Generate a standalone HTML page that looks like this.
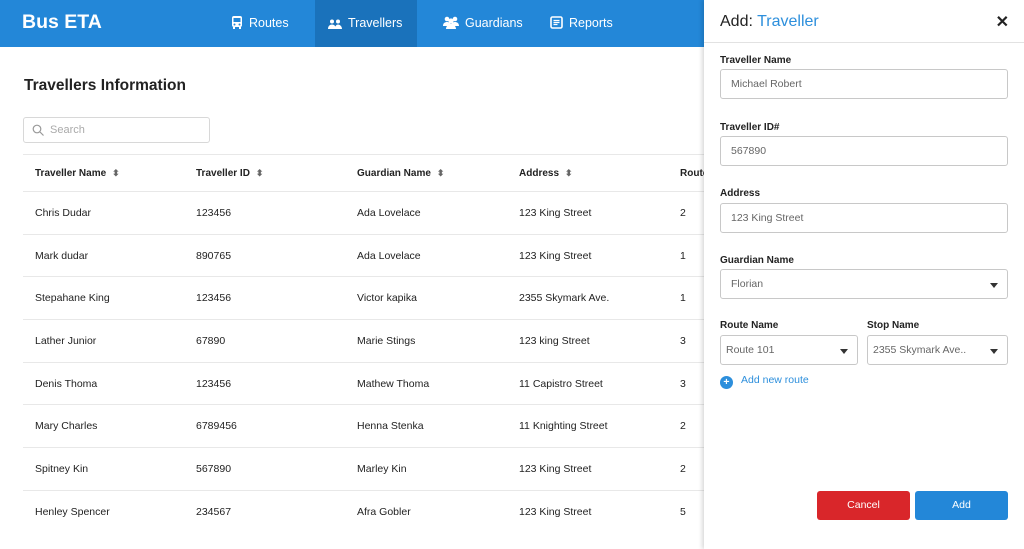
<!DOCTYPE html>
<html><head><style>
*{box-sizing:border-box;margin:0;padding:0}
body{width:1024px;height:549px;overflow:hidden;font-family:"Liberation Sans",sans-serif;background:#fff;position:relative;color:#222}
.nav{position:absolute;left:0;top:0;width:1024px;height:47px;background:#2387d8}
.logo{position:absolute;left:22px;top:11px;color:#fff;font-size:19.5px;font-weight:bold}
.tab{position:absolute;top:0;height:47px;color:#fff;font-size:12.5px;line-height:47px}
.tab svg{vertical-align:-2px;margin-right:6px}
h1{position:absolute;left:24px;top:77px;font-size:15.5px;font-weight:bold;color:#222}
.search{position:absolute;left:23px;top:117px;width:187px;height:26px;border:1px solid #d8d8d8;border-radius:3px;font-size:11px;color:#aaa;padding:6px 0 0 26px}
.search svg{position:absolute;left:8px;top:6px}
table{position:absolute;left:23px;top:154px;width:700px;border-collapse:collapse;font-size:10.5px}
td,th{height:42.7px;text-align:left;padding-left:12px;border-top:1px solid #e8e8e8;white-space:nowrap}
th{height:37px;font-weight:bold;font-size:10px}
.s{color:#666;font-size:9px;margin-left:6px}
.panel{position:absolute;left:704px;top:0;width:320px;height:549px;background:#fff;box-shadow:-2px 0 4px rgba(0,0,0,.15)}
.ph{height:43px;border-bottom:1px solid #e2e2e2;position:relative}
.ph .t{position:absolute;left:16px;top:13px;font-size:16px}
.ph .x{position:absolute;right:15px;top:12px;font-size:16px;font-weight:bold}
.lab{position:absolute;left:16px;font-size:10px;font-weight:bold}
.inp{position:absolute;left:16px;width:288px;height:30px;border:1px solid #c8c8c8;border-radius:3px;font-size:10.5px;color:#666;padding:8px 0 0 10px}
.car{position:absolute;right:9px;top:13px;width:0;height:0;border-left:4px solid transparent;border-right:4px solid transparent;border-top:5px solid #333}
.btn{position:absolute;top:491px;height:29px;border-radius:3px;color:#fff;font-size:10.5px;text-align:center;line-height:29px}
</style></head><body>
<div class="nav">
<div class="logo">Bus ETA</div>
<div class="tab" style="left:231px"><svg width="12" height="13" viewBox="0 0 12 13"><rect x="1" y="0" width="10" height="11" rx="2" fill="#fff"/><rect x="2.5" y="2" width="7" height="4" fill="#2387d8"/><circle cx="3.5" cy="8.5" r="1" fill="#2387d8"/><circle cx="8.5" cy="8.5" r="1" fill="#2387d8"/><rect x="2" y="11" width="2" height="2" fill="#fff"/><rect x="8" y="11" width="2" height="2" fill="#fff"/></svg>Routes</div>
<div class="tab" style="left:315px;width:102px;background:#1a72bb;padding-left:13px"><svg width="14" height="10" viewBox="0 0 14 10"><circle cx="4" cy="2.5" r="2" fill="#fff"/><circle cx="10" cy="2.5" r="2" fill="#fff"/><path d="M0 10c0-3 2-4.5 4-4.5s4 1.5 4 4.5zM7 10c0-3 1.5-4.5 3-4.5s4 1.5 4 4.5z" fill="#fff"/></svg>Travellers</div>
<div class="tab" style="left:443px"><svg width="16" height="13" viewBox="0 0 16 13"><circle cx="4" cy="3" r="2.3" fill="#fff"/><circle cx="12" cy="3" r="2.3" fill="#fff"/><circle cx="8" cy="5" r="2.6" fill="#fff"/><path d="M0 10c0-3 2-4 4-4s4 1 4 4zM8 10c0-3 2-4 4-4s4 1 4 4zM3 13c0-3 2.5-5 5-5s5 2 5 5z" fill="#fff"/></svg>Guardians</div>
<div class="tab" style="left:550px"><svg width="13" height="13" viewBox="0 0 13 13"><rect x="1" y="1" width="11" height="11" rx="1.5" fill="none" stroke="#fff" stroke-width="1.6"/><path d="M3.5 4.5h6M3.5 6.5h6M3.5 8.5h4" stroke="#fff" stroke-width="1.2"/></svg>Reports</div>
</div>
<h1>Travellers Information</h1>
<div class="search"><svg width="12" height="12" viewBox="0 0 12 12"><circle cx="5" cy="5" r="3.8" fill="none" stroke="#999" stroke-width="1.2"/><path d="M8 8l3.5 3.5" stroke="#999" stroke-width="1.2"/></svg>Search</div>
<table>
<tr><th style="width:161px">Traveller Name<span class="s">⬍</span></th><th style="width:161px">Traveller ID<span class="s">⬍</span></th><th style="width:162px">Guardian Name<span class="s">⬍</span></th><th style="width:161px">Address<span class="s">⬍</span></th><th>Route</th></tr>
<tr><td>Chris Dudar</td><td>123456</td><td>Ada Lovelace</td><td>123 King Street</td><td>2</td></tr>
<tr><td>Mark dudar</td><td>890765</td><td>Ada Lovelace</td><td>123 King Street</td><td>1</td></tr>
<tr><td>Stepahane King</td><td>123456</td><td>Victor kapika</td><td>2355 Skymark Ave.</td><td>1</td></tr>
<tr><td>Lather Junior</td><td>67890</td><td>Marie Stings</td><td>123 king Street</td><td>3</td></tr>
<tr><td>Denis Thoma</td><td>123456</td><td>Mathew Thoma</td><td>11 Capistro Street</td><td>3</td></tr>
<tr><td>Mary Charles</td><td>6789456</td><td>Henna Stenka</td><td>11 Knighting Street</td><td>2</td></tr>
<tr><td>Spitney Kin</td><td>567890</td><td>Marley Kin</td><td>123 King Street</td><td>2</td></tr>
<tr><td>Henley Spencer</td><td>234567</td><td>Afra Gobler</td><td>123 King Street</td><td>5</td></tr>
</table>
<div class="panel">
<div class="ph"><span class="t">Add: <span style="color:#2d8fdc">Traveller</span></span><span class="x">✕</span></div>
<div class="lab" style="top:55px">Traveller Name</div><div class="inp" style="top:69px">Michael Robert</div>
<div class="lab" style="top:122px">Traveller ID#</div><div class="inp" style="top:136px">567890</div>
<div class="lab" style="top:188px">Address</div><div class="inp" style="top:203px">123 King Street</div>
<div class="lab" style="top:255px">Guardian Name</div><div class="inp" style="top:269px">Florian<span class="car"></span></div>
<div class="lab" style="top:320px">Route Name</div><div class="inp" style="top:335px;width:138px;padding-left:5px">Route 101<span class="car"></span></div>
<div class="lab" style="top:320px;left:163px">Stop Name</div><div class="inp" style="top:335px;left:163px;width:141px;padding-left:5px">2355 Skymark Ave..<span class="car"></span></div>
<div style="position:absolute;left:16px;top:374px;font-size:10.5px;color:#2d8fdc"><span style="display:inline-block;width:13px;height:13px;border-radius:50%;background:#2d8fdc;color:#fff;text-align:center;line-height:13px;font-weight:bold;margin-right:8px;vertical-align:-2px">+</span>Add new route</div>
<div class="btn" style="left:113px;width:93px;background:#d9262a">Cancel</div>
<div class="btn" style="left:211px;width:93px;background:#2387d8">Add</div>
</div>
</body></html>
